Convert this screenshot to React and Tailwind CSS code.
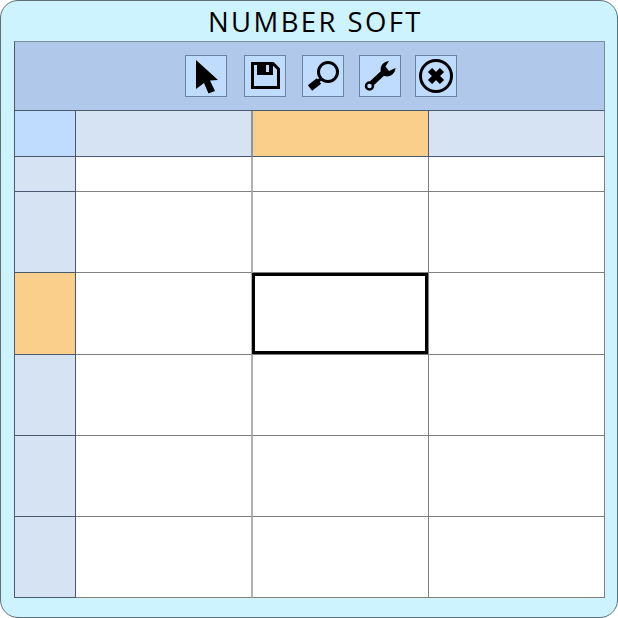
import { useState } from 'react';

const ROW_HEIGHTS = ['h-[35px]', 'h-[81px]', 'h-[82px]', 'h-[81px]', 'h-[81px]', 'h-[81px]'];

function ToolButton({ className = '', children }) {
  return (
    <button className={`w-[42px] h-[42px] shrink-0 flex items-center justify-center bg-[#bfdcff] border border-[#6b83a3] ${className}`}>
      {children}
    </button>
  );
}

function ArrowIcon() {
  return (
    <svg width="40" height="40" viewBox="1 1 40 40">
      <path d="M11 5 L33 25 L25 25.5 L30 36 L23.5 38.5 L19 28 L11 34 Z" fill="#000" />
    </svg>
  );
}

function SaveIcon() {
  return (
    <svg width="40" height="40" viewBox="1 1 40 40">
      <path d="M8.5 8.5 H29 L34.5 14 V32.5 H8.5 Z" fill="none" stroke="#000" strokeWidth="3" />
      <path d="M13 8 H29 V20 H13 Z" fill="#000" />
      <rect x="22" y="10" width="3" height="7" fill="#bfdcff" />
    </svg>
  );
}

function SearchIcon() {
  return (
    <svg width="40" height="40" viewBox="1 1 40 40">
      <circle cx="26" cy="17" r="9.5" fill="none" stroke="#000" strokeWidth="3" />
      <path d="M20 23 L15 27" stroke="#000" strokeWidth="3" />
      <path d="M17 26 L8 33" stroke="#000" strokeWidth="7" />
    </svg>
  );
}

function WrenchIcon() {
  return (
    <svg width="40" height="40" viewBox="1 1 40 40">
      <path d="M11 30 L25 17" stroke="#000" strokeWidth="5.5" />
      <path d="M22.5 19.5 C20 12 23 7 30 6 L26.5 11.5 L30 16 L36.5 13 C36 20 29 24 22.5 19.5 Z" fill="#000" />
      <circle cx="10.5" cy="31" r="3.5" fill="#bfdcff" stroke="#000" strokeWidth="2.5" />
    </svg>
  );
}

function CloseIcon() {
  return (
    <svg width="40" height="40" viewBox="1 1 40 40">
      <circle cx="21" cy="21" r="15.5" fill="none" stroke="#000" strokeWidth="3" />
      <path d="M15 15 L27 27 M27 15 L15 27" stroke="#000" strokeWidth="6" />
    </svg>
  );
}

export default function App() {
  const [selected] = useState({ row: 2, col: 1 });

  return (
    <div className="w-[618px] h-[618px] bg-[#cdf3ff] border border-[#5f6f78] rounded-[18px] overflow-hidden font-['Open_Sans',sans-serif]">
      <h1 className="h-[40px] pl-[207px] pt-[2px] text-[27.5px] leading-[38px] tracking-[2.4px] text-black whitespace-nowrap">
        NUMBER SOFT
      </h1>

      <div className="ml-[13px] w-[591px] border-l border-t border-l-[#4a5a6e] border-t-[#7c8ea3]">
        <div className="h-[69px] flex items-center pl-[170px] bg-[#b0c9ea] border-b border-r border-b-[#4a5a6e] border-r-[#7f8a99]">
          <ToolButton><ArrowIcon /></ToolButton>
          <ToolButton className="ml-[17px]"><SaveIcon /></ToolButton>
          <ToolButton className="ml-[16px]"><SearchIcon /></ToolButton>
          <ToolButton className="ml-[15px]"><WrenchIcon /></ToolButton>
          <ToolButton className="ml-[14px]"><CloseIcon /></ToolButton>
        </div>

        <div className="flex h-[46px]">
          <div className="w-[61px] bg-[#bfdcff] border-r border-b border-[#4a5a6e]" />
          <div className="w-[177px] bg-[#d5e3f3] border-r-2 border-b border-b-[#4a5a6e] border-r-[#8a96a6]" />
          <div className="w-[176px] bg-[#f9cf8b] border-r border-b border-[#4a5a6e]" />
          <div className="w-[176px] bg-[#d5e3f3] border-r border-b border-r-[#7f8a99] border-b-[#4a5a6e]" />
        </div>

        {ROW_HEIGHTS.map((height, row) => (
          <div key={row} className={`flex ${height}`}>
            <div className={`w-[61px] border-r border-b border-[#4a5a6e] ${row === selected.row ? 'bg-[#f9cf8b]' : 'bg-[#d5e3f3]'}`} />
            {[177, 176, 176].map((width, col) => (
              <div
                key={col}
                className={`relative bg-white border-b border-b-[#808080] ${width === 177 ? 'w-[177px] border-r-2 border-r-[#b0b0b0]' : 'w-[176px] border-r border-r-[#808080]'}`}
              >
                {row === selected.row && col === selected.col && (
                  <div className="absolute -left-[1px] top-0 right-0 bottom-0 border-[3px] border-black" />
                )}
              </div>
            ))}
          </div>
        ))}
      </div>
    </div>
  );
}
